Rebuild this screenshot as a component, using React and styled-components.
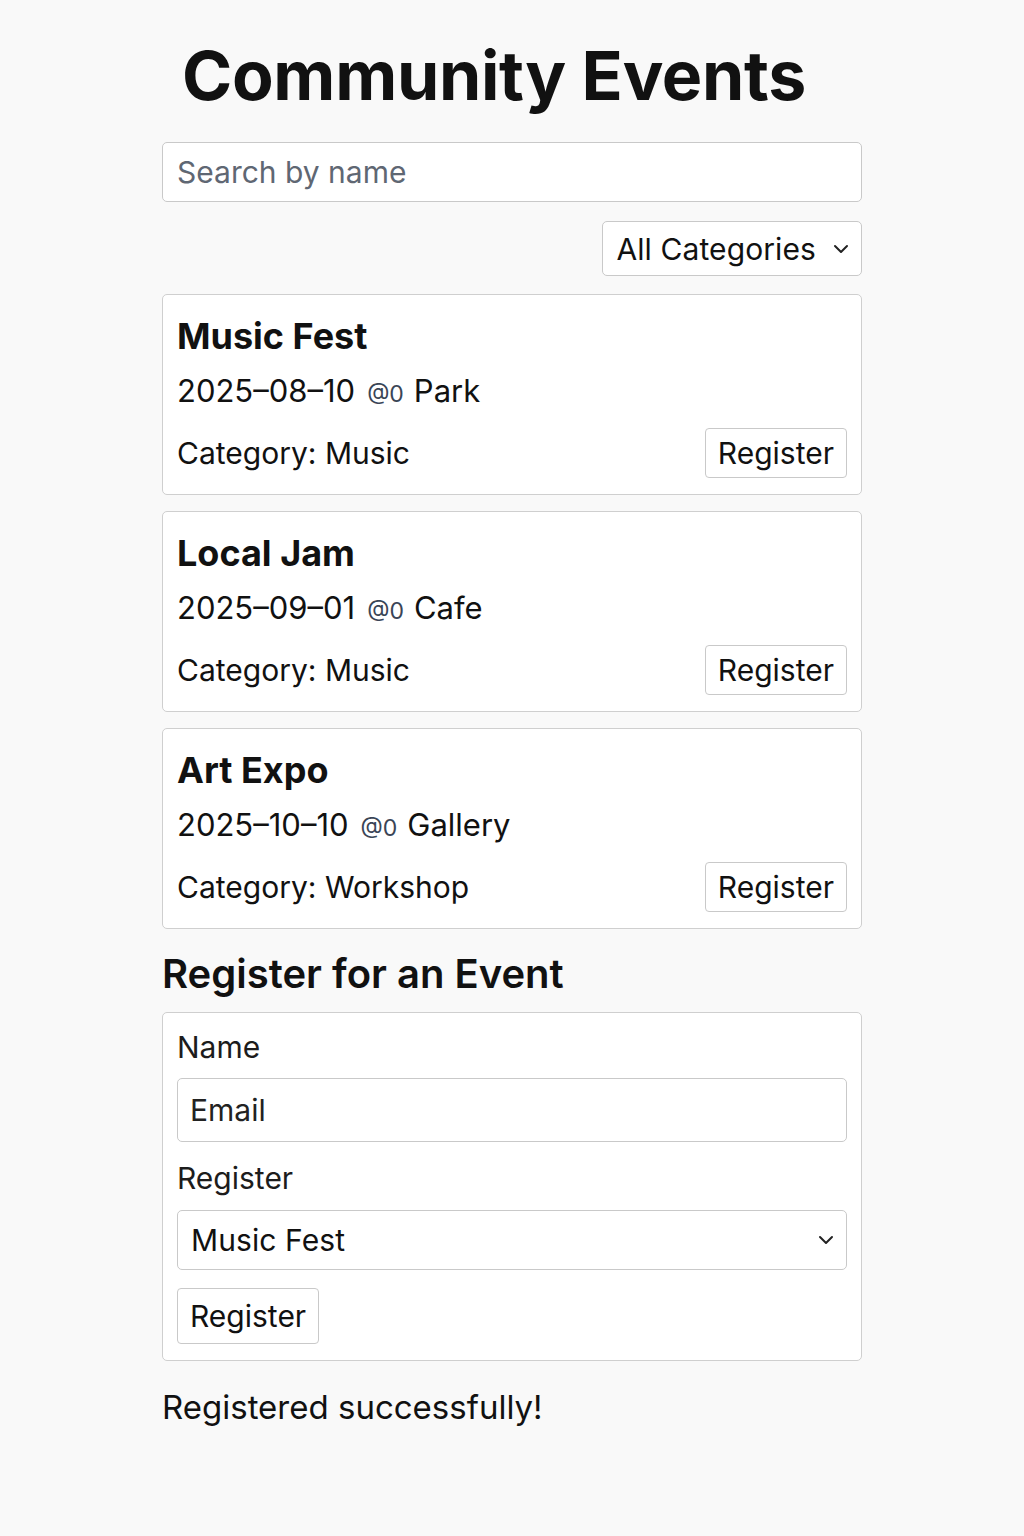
import React from 'react';
import styled, {createGlobalStyle} from 'styled-components';

const GlobalStyle = createGlobalStyle`
  body {
    margin: 0;
    background: #f9f9f9;
    font-family: Inter, "Noto Sans", sans-serif;
    color: #111;
  }
`;

const Page = styled.div`
  width: 700px;
  margin: 0 auto;
  padding: 36px 0 100px;
`;

const Title = styled.h1`
  font-size: 68px;
  font-weight: 700;
  margin: 0 0 28px;
  text-align: center;
  padding-right: 36px;
  line-height: 78px;
  letter-spacing: -0.3px;
`;

const SearchInput = styled.input`
  box-sizing: border-box;
  width: 100%;
  height: 60px;
  padding: 0 14px;
  font-family: inherit;
  font-size: 30px;
  border: 1px solid #c9c9c9;
  border-radius: 5px;
  background: #fff;
  &::placeholder { color: #5f6773; }
`;

const FilterRow = styled.div`
  display: flex;
  justify-content: flex-end;
  margin: 19px 0 18px;
`;

const Select = styled.div`
  box-sizing: border-box;
  display: flex;
  align-items: center;
  justify-content: space-between;
  gap: 17px;
  height: ${p => p.$h || 55}px;
  width: ${p => p.$full ? '100%' : 'auto'};
  padding: 0 12px 0 13px;
  font-size: 30px;
  letter-spacing: 0.1px;
  border: 1px solid #c9c9c9;
  border-radius: 5px;
  background: #fff;
`;

const Chevron = () => (
  <svg width="16" height="10" viewBox="0 0 16 10" fill="none">
    <path d="M2 2l6 6 6-6" stroke="#222" strokeWidth="2" strokeLinecap="round" strokeLinejoin="round" />
  </svg>
);

const List = styled.div`
  display: flex;
  flex-direction: column;
  gap: 16px;
`;

const Card = styled.div`
  box-sizing: border-box;
  background: #fff;
  border: 1px solid #cfcfcf;
  border-radius: 5px;
  padding: ${p => p.$pad || '18px 14px 16px'};
`;

const EventName = styled.h2`
  margin: 0;
  font-size: 36px;
  font-weight: 700;
  line-height: 46px;
`;

const Meta = styled.div`
  font-size: 31px;
  line-height: 40px;
  margin-top: 12px;
  display: flex;
  align-items: baseline;
  gap: 12px;
`;

const At = styled.span`
  font-size: 23px;
  color: #3a4556;
  margin-right: -2px;
`;

const Footer = styled.div`
  display: flex;
  justify-content: space-between;
  align-items: center;
  margin-top: 14px;
`;

const Category = styled.span`
  font-size: 30px;
`;

const Button = styled.button`
  box-sizing: border-box;
  height: ${p => p.$h || 50}px;
  padding: 0 12px;
  font-family: inherit;
  font-size: 30px;
  color: #111;
  background: #fff;
  border: 1px solid #c9c9c9;
  border-radius: 4px;
`;

const SectionTitle = styled.h2`
  margin: 21px 0 14px;
  font-size: 40px;
  font-weight: 600;
  line-height: 48px;
`;

const Form = styled.div`
  display: flex;
  flex-direction: column;
  align-items: flex-start;
`;

const Label = styled.div`
  font-size: 30px;
  line-height: 40px;
  margin-bottom: ${p => p.$mb}px;
  color: #1c1c1c;
`;

const TextInput = styled.input`
  box-sizing: border-box;
  width: 100%;
  height: 64px;
  padding: 0 12px;
  font-family: inherit;
  font-size: 30px;
  border: 1px solid #c9c9c9;
  border-radius: 5px;
  background: #fff;
  margin-bottom: 16px;
  &::placeholder { color: #222; }
`;

const Spacer = styled.div`
  height: ${p => p.$h}px;
`;

const Message = styled.p`
  margin: 26px 0 0;
  font-size: 33px;
`;

const events = [
  {name: 'Music Fest', date: '2025–08–10', place: 'Park', category: 'Music'},
  {name: 'Local Jam', date: '2025–09–01', place: 'Cafe', category: 'Music'},
  {name: 'Art Expo', date: '2025–10–10', place: 'Gallery', category: 'Workshop'},
];

export default function App() {
  return (
    <>
      <GlobalStyle />
      <Page>
        <Title>Community Events</Title>
        <SearchInput placeholder="Search by name" />
        <FilterRow>
          <Select>All Categories <Chevron /></Select>
        </FilterRow>
        <List>
          {events.map(ev => (
            <Card key={ev.name}>
              <EventName>{ev.name}</EventName>
              <Meta>
                <span>{ev.date}</span><At>@0</At><span>{ev.place}</span>
              </Meta>
              <Footer>
                <Category>Category: {ev.category}</Category>
                <Button>Register</Button>
              </Footer>
            </Card>
          ))}
        </List>
        <SectionTitle>Register for an Event</SectionTitle>
        <Card $pad="14px 14px 16px">
          <Form>
            <Label $mb={11}>Name</Label>
            <TextInput placeholder="Email" />
            <Label $mb={12}>Register</Label>
            <Select $full $h={60}>Music Fest <Chevron /></Select>
            <Spacer $h={18} />
            <Button $h={56}>Register</Button>
          </Form>
        </Card>
        <Message>Registered successfully!</Message>
      </Page>
    </>
  );
}
